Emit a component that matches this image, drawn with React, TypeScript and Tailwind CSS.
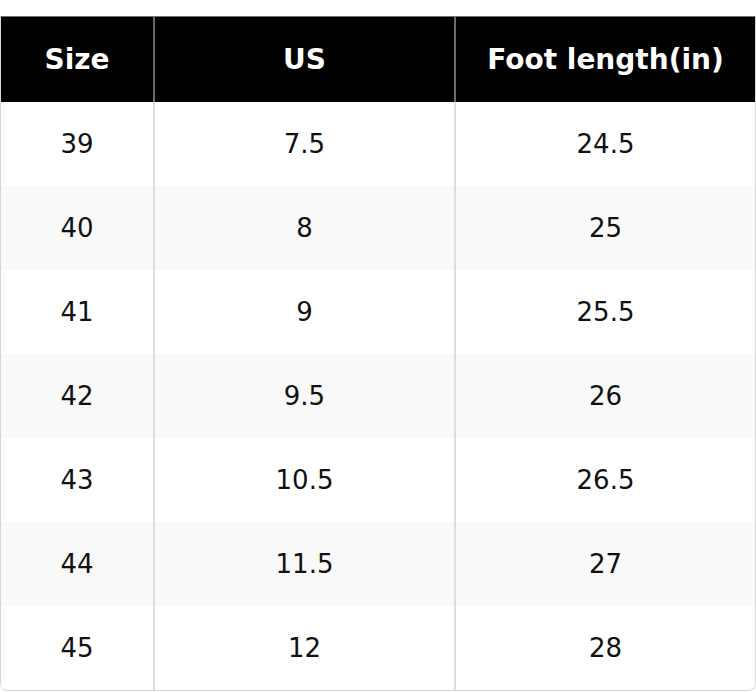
const rows = [
  ['39', '7.5', '24.5'],
  ['40', '8', '25'],
  ['41', '9', '25.5'],
  ['42', '9.5', '26'],
  ['43', '10.5', '26.5'],
  ['44', '11.5', '27'],
  ['45', '12', '28'],
];

const headers = ['Size', 'US', 'Foot length(in)'];

export default function App() {
  return (
    <div className="w-[756px] bg-white pt-4 font-['DejaVu_Sans',sans-serif]">
      <div className="overflow-hidden rounded-b-lg border border-t-[#707070] border-x-[#d6d6d6] border-b-[#d6d6d6]">
        {/* Header */}
        <div className="grid h-[85px] grid-cols-[154px_301px_1fr] bg-black text-[28px] font-bold text-white">
          {headers.map((h, i) => (
            <div
              key={h}
              className={`flex items-center justify-center ${i < 2 ? 'border-r-2 border-[#6a6a6a]' : ''}`}
            >
              {h}
            </div>
          ))}
        </div>
        {/* Body */}
        {rows.map((r, ri) => (
          <div
            key={r[0]}
            className={`grid h-[84px] grid-cols-[154px_301px_1fr] text-[26px] text-[#111] ${
              ri % 2 === 1 ? 'bg-[#f9f9f9]' : 'bg-white'
            }`}
          >
            {r.map((c, i) => (
              <div
                key={i}
                className={`flex items-center justify-center ${i < 2 ? 'border-r-2 border-[#dedede]' : ''}`}
              >
                {c}
              </div>
            ))}
          </div>
        ))}
      </div>
    </div>
  );
}
